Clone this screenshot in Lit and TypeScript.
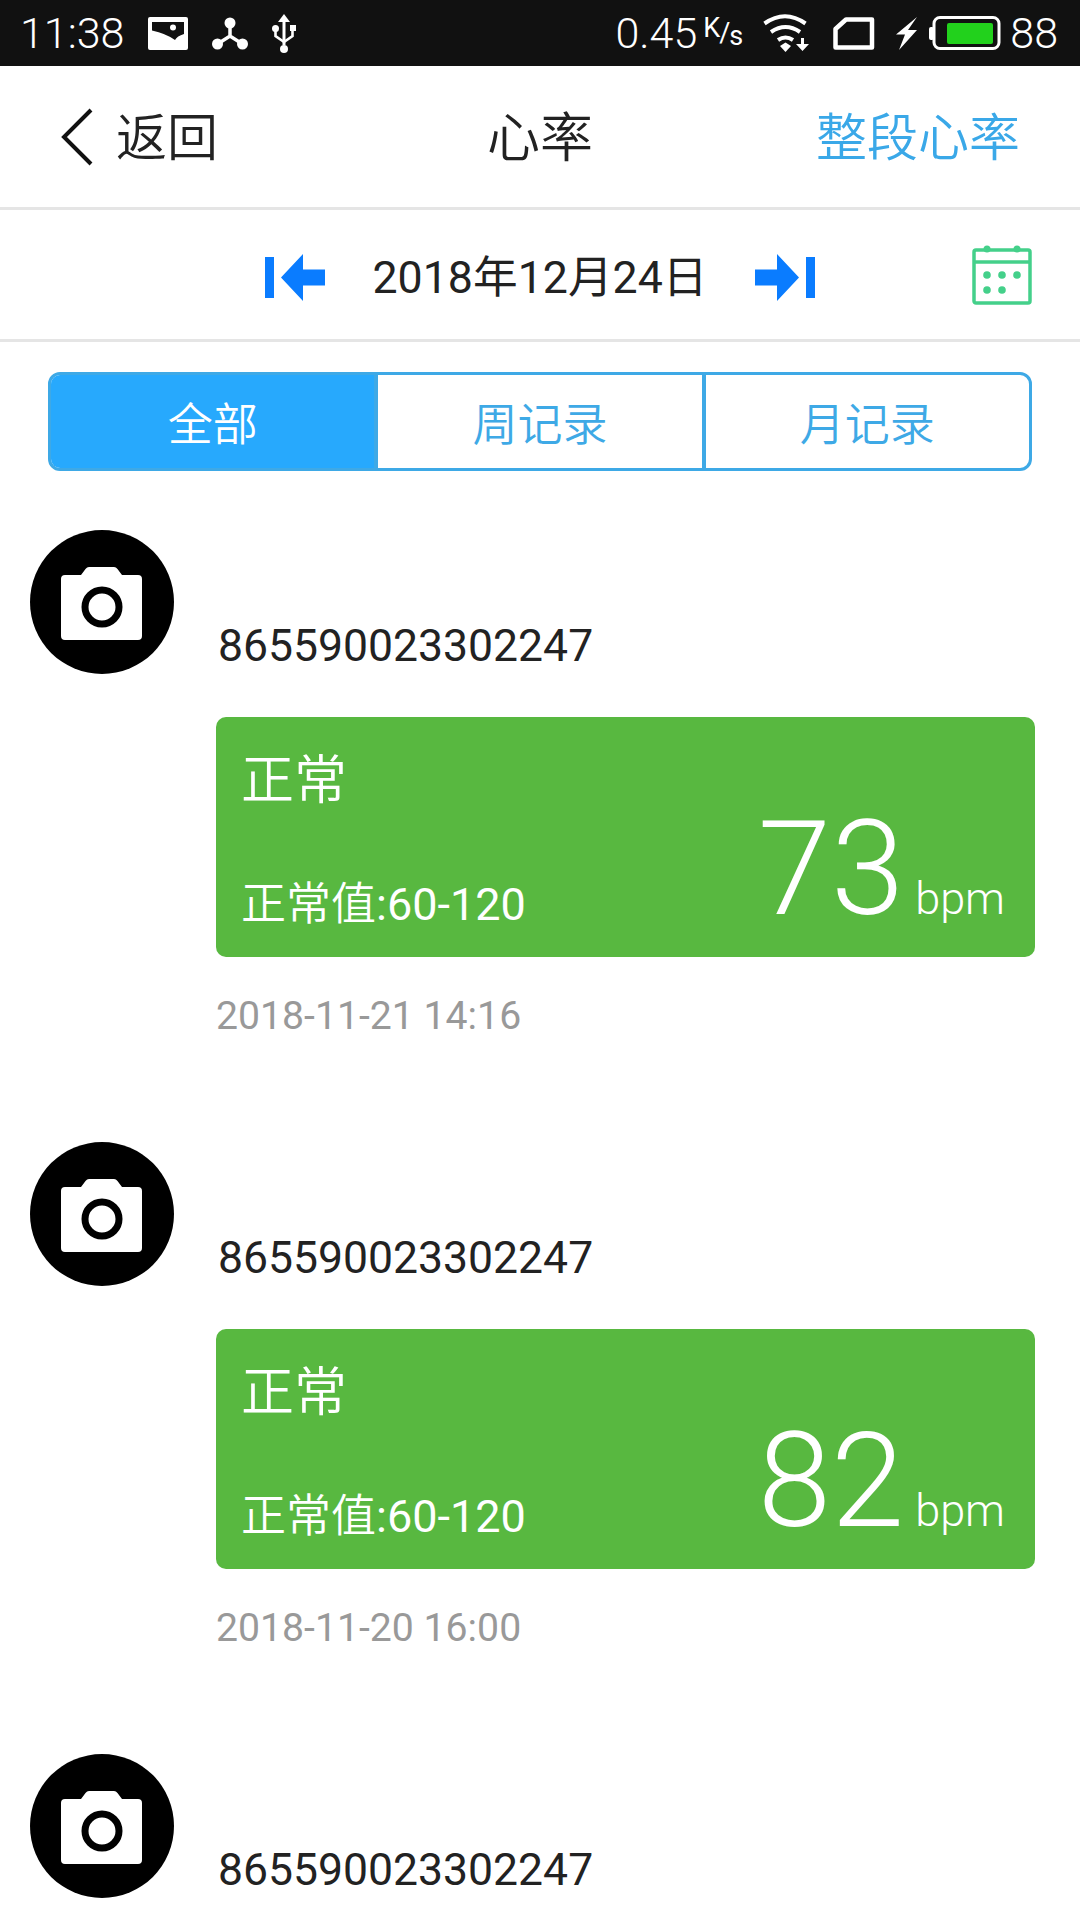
import { LitElement, html, css, svg } from 'lit';
import { customElement, state } from 'lit/decorators.js';

const cameraIcon = html`<svg class="avatar" viewBox="0 0 144 144" width="144" height="144">
  <circle cx="72" cy="72" r="72" fill="#000"></circle>
  <path fill="#fff" d="M35 45h16l4.500-6q1.500-2 3.500-2h25q2 0 3.500 2l4.500 6h16q4 0 4 4v57q0 4-4 4h-73q-4 0-4-4v-57q0-4 4-4z"></path>
  <circle cx="72" cy="77" r="17" fill="#fff" stroke="#000" stroke-width="7"></circle>
</svg>`;

const statusIcons = {
  image: svg`<path fill="#fff" fill-rule="evenodd" d="M2 0h36q2 0 2 2v29q0 2-2 2H2q-2 0-2-2V2q0-2 2-2zM4 9v4.500q14 3 23 9.500 2-4 9-6V5H4z"></path><circle cx="25" cy="10.500" r="3" fill="#fff"></circle>`,
  share: svg`<g fill="#fff"><circle cx="18" cy="6" r="5.500"></circle><circle cx="5.500" cy="27" r="5.500"></circle><circle cx="30.500" cy="27" r="5.500"></circle></g><path fill="none" stroke="#fff" stroke-width="3.500" d="M18 6v13M5.500 27L18 19l12.500 8"></path>`,
  usb: svg`<path fill="#fff" d="M12 0l6 8h-4.500v23h-3V8H6z"></path><circle cx="12" cy="35" r="4" fill="#fff"></circle><circle cx="3.500" cy="14.500" r="3.500" fill="#fff"></circle><rect x="18" y="11" width="6" height="6" fill="#fff"></rect><path fill="none" stroke="#fff" stroke-width="2.600" d="M3.500 15v7l8.500 6 8.500-6v-7"></path>`,
  wifi: svg`<g fill="none" stroke="#fff" stroke-width="4"><path d="M1.500 9.500Q22-5 42.500 9.500"></path><path d="M8 18q14.500-10 29 0"></path><path d="M15 26q7.500-5 15 0"></path></g><path fill="#fff" d="M17 32l5.500-3.500 5.500 3.500-5.500 6z"></path><path fill="#fff" d="M38 24h3v6h5l-6.500 7-6.500-7h5z"></path>`,
  sim: svg`<path fill="none" stroke="#fff" stroke-width="4.500" stroke-linejoin="round" d="M13 2.500h26v28H2.500V12z"></path>`,
  bolt: svg`<path fill="#fff" d="M21 0L12 13h9L3 33l6-15.500H0z"></path>`,
  battery: svg`<rect x="0" y="11" width="5" height="13" rx="2" fill="#fff"></rect><rect x="5" y="1.500" width="65" height="31" rx="6" fill="none" stroke="#fff" stroke-width="3"></rect><rect x="18" y="7" width="46" height="21" rx="2" fill="#22d11c"></rect>`,
};

const jumpArrow = html`<svg viewBox="0 0 60 47" width="60" height="47" fill="#0a7cff">
  <rect x="0" y="3" width="9" height="41"></rect>
  <path d="M16 23.500L38 0v15.500h22v16H38V47z"></path>
</svg>`;

@customElement('app-root')
class AppRoot extends LitElement {
  // the third row is cut by the bottom of the screen, only its device id shows
  @state() records: { id: string; status?: string; bpm?: number; time?: string }[] = [
    { id: '865590023302247', status: '正常', bpm: 73, time: '2018-11-21 14:16' },
    { id: '865590023302247', status: '正常', bpm: 82, time: '2018-11-20 16:00' },
    { id: '865590023302247' },
  ];

  static styles = css`
    :host {
      display: block;
      width: 1080px;
      height: 1920px;
      overflow: hidden;
      background: #fff;
      color: #222;
      font-family: Roboto, "Noto Sans CJK SC", sans-serif;
    }

    .status {
      display: flex;
      align-items: center;
      height: 66px;
      padding: 0 22px 0 20px;
      box-sizing: border-box;
      background: #111;
      color: #fff;
      font-size: 43px;
      font-weight: 300;
    }
    .status svg { display: block; flex: none; }
    .time { margin-right: 24px; }
    .status-right { display: flex; align-items: center; margin-left: auto; }
    .speed { margin-right: 6px; }
    .rate { display: flex; font-size: 27px; font-weight: 400; margin-right: 21px; line-height: 40px; letter-spacing: -1px; }
    .rate .k { transform: translateY(-5px); }
    .rate .s { transform: translateY(3px); }
    .gap-share { margin-left: 24px; }
    .gap-usb { margin-left: 24px; }
    .gap-sim { margin-left: 23px; }
    .gap-bolt { margin-left: 21px; }
    .gap-battery { margin-left: 11px; }
    .level { margin-left: 9px; }

    .nav {
      display: grid;
      grid-template-columns: 1fr auto 1fr;
      align-items: center;
      height: 144px;
      padding: 0 60px;
      box-sizing: border-box;
      font-size: 51px;
      font-weight: 350;
      border-bottom: 3px solid #e5e5e5;
    }
    .nav span { margin-bottom: 5px; }
    .back { display: flex; align-items: center; gap: 23px; }
    .back svg { display: block; }
    .title { font-size: 53px; }
    .action { justify-self: end; color: #3aa8e8; }

    .dates {
      display: grid;
      grid-template-columns: 1fr auto 1fr;
      align-items: center;
      height: 132px;
      padding: 0 48px;
      box-sizing: border-box;
      border-bottom: 3px solid #e5e5e5;
    }
    .date-nav { grid-column: 2; display: flex; align-items: center; gap: 48px; font-size: 44.700px; }
    .date-nav svg { display: block; margin-top: 5px; }
    .date-text { margin-bottom: 2px; }
    .flip { transform: scaleX(-1); }
    .calendar { justify-self: end; display: block; }

    .tabs {
      display: flex;
      height: 99px;
      margin: 30px 48px 0 48px;
      box-sizing: border-box;
      border: 3px solid #3ea9e6;
      border-radius: 12px;
      overflow: hidden;
      font-size: 45px;
      font-weight: 350;
      color: #3ea9e6;
    }
    .tab { flex: 1; display: flex; align-items: center; justify-content: center; }
    .tab + .tab { border-left: 4px solid #3ea9e6; }
    .tab.active { background: #27a9fd; color: #fff; }

    .list { padding-top: 59px; }
    .record {
      display: flex;
      gap: 42px;
      height: 612px;
      padding: 0 45px 0 30px;
      box-sizing: border-box;
    }
    .avatar { display: block; flex: none; }
    .body { flex: 1; padding-top: 86px; min-width: 0; }
    .device { height: 60px; line-height: 60px; font-size: 44.500px; padding-left: 2px; }

    .card {
      display: flex;
      justify-content: space-between;
      height: 240px;
      margin-top: 41px;
      padding: 0 30px 0 25px;
      box-sizing: border-box;
      background: #58b840;
      border-radius: 10px;
      color: #fff;
    }
    .card-left { display: flex; flex-direction: column; justify-content: space-between; padding: 29px 0 21px; font-weight: 350; }
    .state { font-size: 53px; line-height: 70px; }
    .range { font-size: 45px; line-height: 62px; }
    .range-num { font-weight: 400; }
    .reading { display: flex; align-items: baseline; gap: 11px; align-self: flex-end; padding-bottom: 23px; }
    .value { font-size: 132px; font-weight: 300; line-height: 130px; }
    .unit { font-size: 45px; font-weight: 300; }

    .stamp { margin-top: 34px; font-size: 39.200px; line-height: 50px; color: #999; }
  `;

  render() {
    return html`
      <div class="status">
        <span class="time">11:38</span>
        <svg viewBox="0 0 40 33" width="40" height="33">${statusIcons.image}</svg>
        <svg class="gap-share" viewBox="0 0 36 33" width="36" height="33">${statusIcons.share}</svg>
        <svg class="gap-usb" viewBox="0 0 24 39" width="24" height="39">${statusIcons.usb}</svg>
        <div class="status-right">
          <span class="speed">0.45</span>
          <span class="rate"><span class="k">K</span><span>/</span><span class="s">s</span></span>
          <svg viewBox="0 0 47 38" width="47" height="38">${statusIcons.wifi}</svg>
          <svg class="gap-sim" viewBox="0 0 42 33" width="42" height="33">${statusIcons.sim}</svg>
          <svg class="gap-bolt" viewBox="0 0 22 33" width="22" height="33">${statusIcons.bolt}</svg>
          <svg class="gap-battery" viewBox="0 0 72 34" width="72" height="34">${statusIcons.battery}</svg>
          <span class="level">88</span>
        </div>
      </div>

      <div class="nav">
        <div class="back">
          <svg viewBox="0 0 33 58" width="33" height="58"><path fill="none" stroke="#111" stroke-width="4" d="M31 2L4 29l27 27"></path></svg>
          <span>返回</span>
        </div>
        <span class="title">心率</span>
        <span class="action">整段心率</span>
      </div>

      <div class="dates">
        <div class="date-nav">
          ${jumpArrow}
          <span class="date-text">2018年12月24日</span>
          <span class="flip">${jumpArrow}</span>
        </div>
        <svg class="calendar" viewBox="0 0 60 60" width="60" height="60">
          <g fill="none" stroke="#44d08a" stroke-width="3.500">
            <rect x="2" y="5" width="56" height="53" rx="2"></rect>
            <path d="M2 17h56"></path>
          </g>
          <g fill="#44d08a">
            <circle cx="15" cy="4" r="3.500"></circle><circle cx="45" cy="4" r="3.500"></circle>
            <circle cx="15" cy="30" r="3.800"></circle><circle cx="30" cy="30" r="3.800"></circle><circle cx="45" cy="30" r="3.800"></circle>
            <circle cx="15" cy="45" r="3.800"></circle><circle cx="30" cy="45" r="3.800"></circle>
          </g>
        </svg>
      </div>

      <div class="tabs">
        <div class="tab active">全部</div>
        <div class="tab">周记录</div>
        <div class="tab">月记录</div>
      </div>

      <div class="list">
        ${this.records.map(r => html`
          <div class="record">
            ${cameraIcon}
            <div class="body">
              <div class="device">${r.id}</div>
              ${r.bpm ? html`
                <div class="card">
                  <div class="card-left">
                    <span class="state">${r.status}</span>
                    <span class="range">正常值<span class="range-num">:60-120</span></span>
                  </div>
                  <div class="reading">
                    <span class="value">${r.bpm}</span>
                    <span class="unit">bpm</span>
                  </div>
                </div>
                <div class="stamp">${r.time}</div>
              ` : ''}
            </div>
          </div>
        `)}
      </div>
    `;
  }
}
